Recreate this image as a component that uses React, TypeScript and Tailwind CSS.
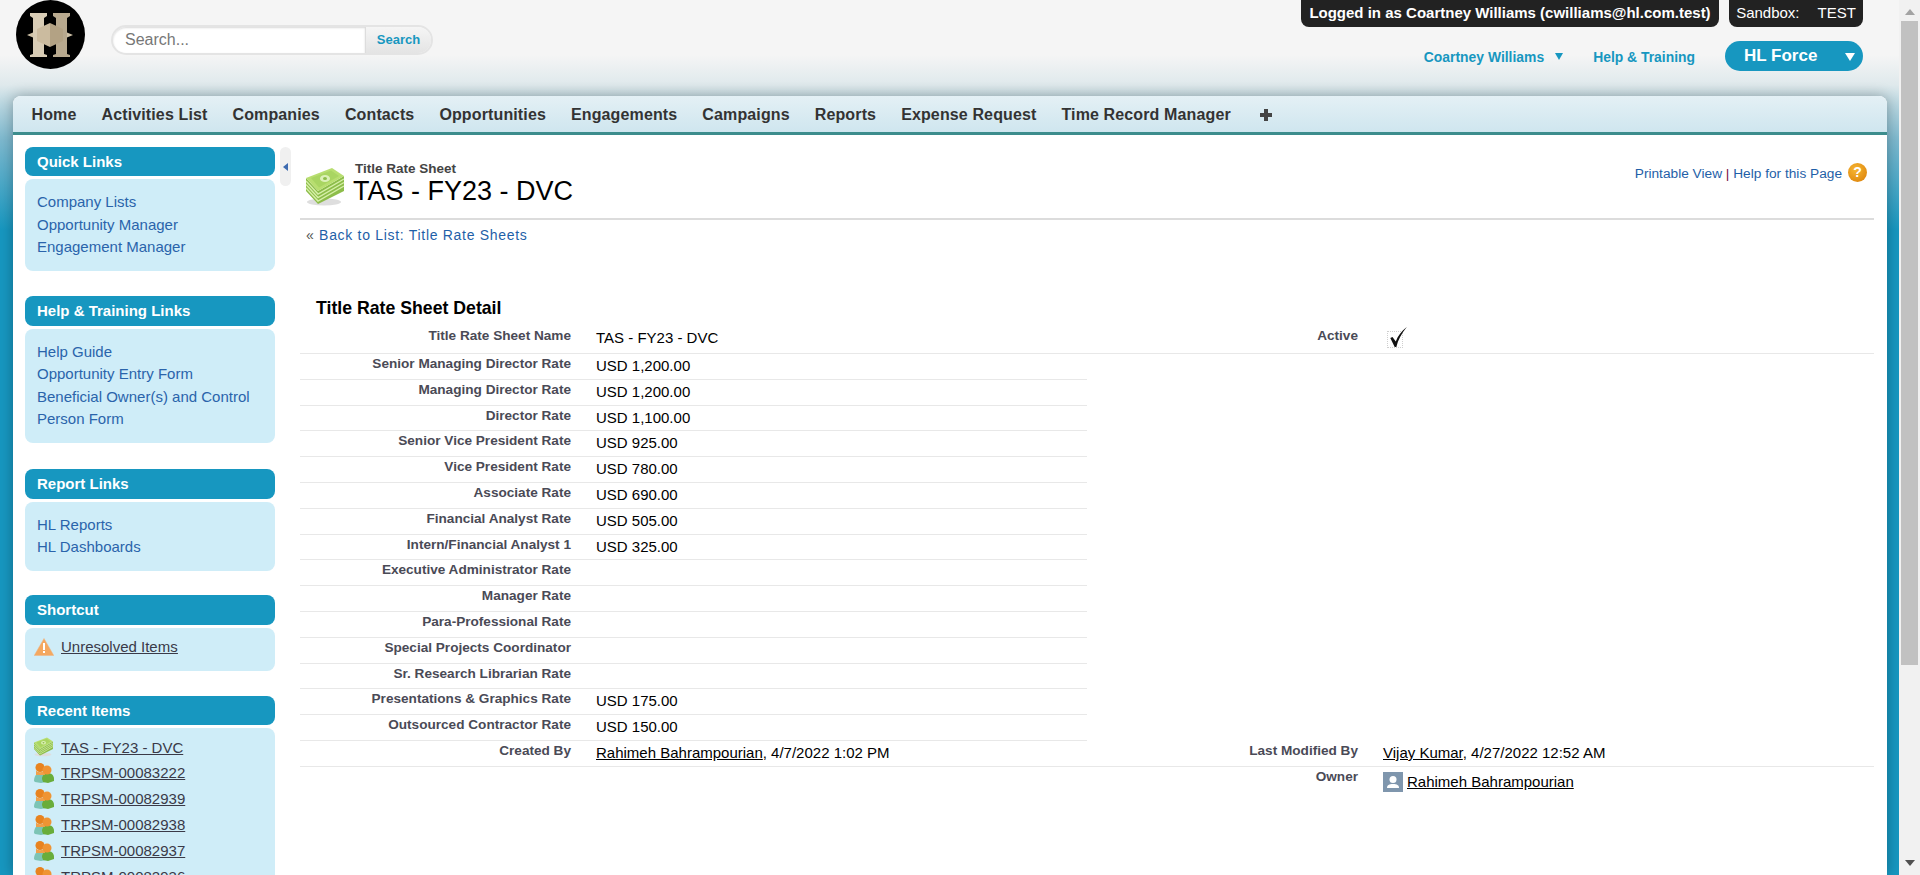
import React from 'react';

const navItems = ['Home', 'Activities List', 'Companies', 'Contacts', 'Opportunities', 'Engagements', 'Campaigns', 'Reports', 'Expense Request', 'Time Record Manager'];

const rateRows = [
  ['Senior Managing Director Rate', 'USD 1,200.00'],
  ['Managing Director Rate', 'USD 1,200.00'],
  ['Director Rate', 'USD 1,100.00'],
  ['Senior Vice President Rate', 'USD 925.00'],
  ['Vice President Rate', 'USD 780.00'],
  ['Associate Rate', 'USD 690.00'],
  ['Financial Analyst Rate', 'USD 505.00'],
  ['Intern/Financial Analyst 1', 'USD 325.00'],
  ['Executive Administrator Rate', ''],
  ['Manager Rate', ''],
  ['Para-Professional Rate', ''],
  ['Special Projects Coordinator', ''],
  ['Sr. Research Librarian Rate', ''],
  ['Presentations & Graphics Rate', 'USD 175.00'],
  ['Outsourced Contractor Rate', 'USD 150.00'],
];

const recentItems = ['TRPSM-00083222', 'TRPSM-00082939', 'TRPSM-00082938', 'TRPSM-00082937', 'TRPSM-00082936'];

function Logo() {
  return (
    <svg width="69" height="69" viewBox="0 0 69 69" className="shrink-0">
      <circle cx="34.5" cy="34.5" r="34.5" fill="#000" />
      <path d="M14 13h17v3l-3 2v36l3 1v2H14v-2l3-1V18l-3-2z" fill="#d8ccb5" />
      <path d="M37 13h17v3l-3 2v36l3 1v2H37v-2l3-1V18l-3-2z" fill="#b8a98e" />
      <path d="M11 35l6-2.5v5zM57 35l-6-2.5v5z" fill="#cfc2a8" />
      <path d="M21 29l13-6v24l-13-6z" fill="#cbbb9f" />
      <path d="M34 23l13 6v12l-13 6z" fill="#b3a284" />
    </svg>
  );
}

function MoneyIcon({ size }: { size: number }) {
  return (
    <svg width={size} height={size} viewBox="0 0 40 40">
      <ellipse cx="18" cy="35" rx="17" ry="3.5" fill="#dedede" />
      <path d="M0 11l12 13 26-15v15L12 37 0 24z" fill="#8dbd4a" />
      <path d="M0 14l12 13 26-15M0 17.5l12 13 26-15M0 21l12 13 26-15" fill="none" stroke="#d6efa8" strokeWidth="1.4" />
      <path d="M0 11L26 1l12 8-26 15z" fill="#b8de70" />
      <path d="M5 11L25 3.5l8 5.5-20 11.5z" fill="#a9d562" />
      <ellipse cx="19" cy="11.5" rx="5" ry="3.6" fill="#dcf0b8" />
      <ellipse cx="19" cy="11.5" rx="2" ry="1.5" fill="#8dbd4a" />
    </svg>
  );
}

function PeopleIcon() {
  return (
    <svg width="20" height="20" viewBox="0 0 20 20" className="shrink-0">
      <path d="M0 18c0-4 2-8 6-8s7 3 7 8l-1 1-5 1-6-1z" fill="#7cc4b5" />
      <path d="M8 16c0-4 3-6 6-6s6 2 6 6v2l-6 2-5-1z" fill="#69ad3a" />
      <circle cx="6" cy="4.5" r="4.5" fill="#e8831f" />
      <path d="M2 7c1 3 7 3 8 0l1 5H2z" fill="#f0a04b" />
      <circle cx="13" cy="7" r="4.5" fill="#ef9433" />
    </svg>
  );
}

function WarningIcon() {
  return (
    <svg width="20" height="18" viewBox="0 0 20 18" className="shrink-0">
      <path d="M10 0.5L19.8 17.5H0.2z" fill="#f4a860" stroke="#eeb483" strokeWidth="0.5" />
      <rect x="9" y="5" width="2" height="7" fill="#fff" />
      <rect x="9" y="13" width="2" height="2" fill="#fff" />
    </svg>
  );
}

function SideBox({ title, children, bodyClass, headClass }: { title: string; children: React.ReactNode; bodyClass: string; headClass: string }) {
  return (
    <div className="flex flex-col gap-[3px]">
      <div className={`flex items-center rounded-lg bg-[#1797c0] pt-[2px] pl-3 text-[15px] font-bold text-white ${headClass}`}>{title}</div>
      <div className={`rounded-lg bg-[#cfedf8] ${bodyClass}`}>{children}</div>
    </div>
  );
}

function LinkList({ items }: { items: string[] }) {
  return (
    <div className="flex flex-col pl-3 text-[15px] leading-[22.5px] text-[#2a64ab]">
      {items.map((item) => (
        <a key={item}>{item}</a>
      ))}
    </div>
  );
}

function Label({ text }: { text: string }) {
  return <div className="w-[271px] shrink-0 pt-[2px] text-right text-[13.6px] leading-[16px] font-bold text-[#4a4a56]">{text}</div>;
}

export default function App() {
  return (
    <div className="flex h-[875px] w-full overflow-hidden font-['Liberation_Sans',Arial,sans-serif]">
      <div className="flex min-w-0 flex-1 flex-col bg-[linear-gradient(180deg,#f5f5f5_0px,#f5f5f5_55px,#dfe9ec_85px,#b8d6e0_105px,#7db9cf_140px,#1797c0_230px)]">
        {/* Header */}
        <div className="flex h-[96px] shrink-0 justify-between pr-[36px]">
          <div className="flex items-start pl-4">
            <Logo />
            <div className="mt-[25px] ml-[26px] flex h-[30px] w-[322px] overflow-hidden rounded-full border-2 border-[#e4e4e4]">
              <input placeholder="Search..." className="min-w-0 flex-1 rounded-l-full bg-white pl-[12px] text-[16px] text-[#777] shadow-[inset_0_1px_2px_rgba(0,0,0,0.15)] outline-none placeholder:text-[#777]" />
              <div className="flex w-[66px] items-center justify-center border-l border-[#ddd] bg-[linear-gradient(180deg,#f5f5f5,#e4e4e4)] text-[13px] font-bold text-[#1797c0]">Search</div>
            </div>
          </div>
          <div className="flex flex-col items-end">
            <div className="flex gap-[10px]">
              <div className="flex h-[27px] w-[418px] items-center justify-center rounded-b-lg bg-[#222] text-[15px] font-bold text-white">Logged in as Coartney Williams (cwilliams@hl.com.test)</div>
              <div className="flex h-[27px] w-[134px] items-center justify-center gap-[18px] rounded-b-lg bg-[#222] text-[15px] text-white">
                <span>Sandbox:</span>
                <span>TEST</span>
              </div>
            </div>
            <div className="mt-[14px] flex items-center text-[13.9px] font-bold text-[#1797c0]">
              <span className="pt-[2px]">Coartney Williams</span>
              <span className="mt-[1px] ml-[11px] h-0 w-0 border-x-[4.5px] border-t-[7px] border-x-transparent border-t-[#1797c0]" />
              <span className="ml-[30px] pt-[2px]">Help &amp; Training</span>
              <div className="ml-[30px] flex h-[30px] w-[138px] items-center rounded-full bg-[#1797c0] pl-[19px] text-[17px] font-bold text-white">
                <span>HL Force</span>
                <span className="mt-[1px] ml-[28px] h-0 w-0 border-x-[5px] border-t-[8px] border-x-transparent border-t-white" />
              </div>
            </div>
          </div>
        </div>

        {/* Main panel */}
        <div className="mr-[12px] ml-[13px] flex min-h-0 flex-1 flex-col rounded-t-lg bg-white shadow-[0_0_14px_rgba(0,0,0,0.3)]">
          <div className="flex h-[39px] shrink-0 items-center gap-[25px] rounded-t-lg border-b-[3px] border-[#3c8d8d] bg-[linear-gradient(180deg,#e4f0f5,#cfe6ef)] pt-[1px] pl-[18.5px] text-[16px] font-bold tracking-[0.13px] text-[#333]">
            {navItems.map((item) => (
              <span key={item}>{item}</span>
            ))}
            <svg width="12" height="12" viewBox="0 0 12 12" className="ml-[4px]">
              <path d="M4 0h4v4h4v4H8v4H4V8H0V4h4z" fill="#444" />
            </svg>
          </div>

          <div className="flex min-h-0 flex-1 overflow-hidden">
            {/* Sidebar */}
            <div className="flex w-[262px] shrink-0 flex-col pt-3 pl-3">
              <SideBox title="Quick Links" headClass="h-[29px]" bodyClass="py-3">
                <LinkList items={['Company Lists', 'Opportunity Manager', 'Engagement Manager']} />
              </SideBox>
              <div className="mt-[25px]">
                <SideBox title="Help & Training Links" headClass="h-[30px]" bodyClass="py-3">
                  <LinkList items={['Help Guide', 'Opportunity Entry Form', 'Beneficial Owner(s) and Control Person Form']} />
                </SideBox>
              </div>
              <div className="mt-[26px]">
                <SideBox title="Report Links" headClass="h-[30px]" bodyClass="py-3">
                  <LinkList items={['HL Reports', 'HL Dashboards']} />
                </SideBox>
              </div>
              <div className="mt-[24px]">
                <SideBox title="Shortcut" headClass="h-[30px]" bodyClass="h-[43px] pt-[8px] pl-[9px]">
                  <div className="flex items-center gap-[7px] text-[15px] text-[#3a3a48] underline">
                    <WarningIcon />
                    <a>Unresolved Items</a>
                  </div>
                </SideBox>
              </div>
              <div className="mt-[25px]">
                <SideBox title="Recent Items" headClass="h-[29px]" bodyClass="pt-[7px] pl-[9px]">
                  <div className="flex flex-col text-[15px] leading-[25.9px] text-[#3a3a48] underline">
                    <div className="flex items-center gap-[7px]">
                      <MoneyIcon size={20} />
                      <a>TAS - FY23 - DVC</a>
                    </div>
                    {recentItems.map((item) => (
                      <div key={item} className="flex items-center gap-[7px]">
                        <PeopleIcon />
                        <a>{item}</a>
                      </div>
                    ))}
                  </div>
                </SideBox>
              </div>
            </div>

            {/* Collapse handle */}
            <div className="mt-3 ml-[5px] flex h-[39px] w-[11px] shrink-0 items-center justify-center rounded-md bg-[#f0f0f0]">
              <span className="h-0 w-0 border-y-[4px] border-r-[5px] border-y-transparent border-r-[#3d6bb0]" />
            </div>

            {/* Content */}
            <div className="ml-[9px] min-w-0 flex-1 pr-[13px] text-black">
              <div className="flex h-[85px] justify-between border-b-2 border-[#dcdcdc] pl-[6px]">
                <div className="flex pt-[25px]">
                  <div className="mt-[7px] mr-[7px]">
                    <MoneyIcon size={40} />
                  </div>
                  <div>
                    <div className="mt-[1px] ml-[2px] text-[13.5px] leading-[16px] font-bold text-[#444]">Title Rate Sheet</div>
                    <h1 className="-mt-[1px] text-[27px] leading-[30px] text-black">TAS - FY23 - DVC</h1>
                  </div>
                </div>
                <div className="flex items-center self-start pt-[26px] pr-[7px]">
                  <span className="pt-[3px] text-[13.7px] text-[#1f5fa8]">
                    Printable View <span className="text-[#7a1040]">|</span> Help for this Page
                  </span>
                  <span className="ml-[6px] flex h-[19px] w-[19px] items-center justify-center rounded-full bg-[radial-gradient(circle_at_40%_35%,#f7b733,#d97c06)] text-[14px] font-bold text-white">?</span>
                </div>
              </div>

              <div className="mt-[7px] pl-[6px] text-[14px] leading-[16px] tracking-[0.7px] text-[#1f5fa8]">
                <span className="text-[#555]">«</span> Back to List: Title Rate Sheets
              </div>

              <h2 className="mt-[55px] pl-4 text-[17.7px] leading-[20px] font-bold text-black">Title Rate Sheet Detail</h2>

              <div className="mt-[8px] text-[15px]">
                <div className="flex h-[28px] border-b border-[#e8e8e8]">
                  <Label text="Title Rate Sheet Name" />
                  <div className="ml-[25px] w-[491px] pt-[4px] leading-[16px]">TAS - FY23 - DVC</div>
                  <Label text="Active" />
                  <div className="relative mt-[5px] ml-[29px] h-[17px] w-[16px] border border-dotted border-[#cfcfcf]">
                    <svg width="20" height="22" viewBox="0 0 18 20" className="absolute -top-[6px] left-0">
                      <path d="M2 11l2-1 3 4C9 9 12 5 17 1 12 7 9 13 7.5 19H6z" fill="#111" />
                    </svg>
                  </div>
                </div>

                {rateRows.map(([label, value]) => (
                  <div key={label} className="flex h-[25.8px] w-[787px] border-b border-[#e8e8e8]">
                    <Label text={label} />
                    <div className="ml-[25px] pt-[4px] leading-[16px]">{value}</div>
                  </div>
                ))}

                <div className="flex h-[25.8px] border-b border-[#e8e8e8]">
                  <Label text="Created By" />
                  <div className="ml-[25px] w-[491px] pt-[4px] leading-[16px]">
                    <span className="underline">Rahimeh Bahrampourian</span>, 4/7/2022 1:02 PM
                  </div>
                  <Label text="Last Modified By" />
                  <div className="ml-[25px] pt-[4px] leading-[16px]">
                    <span className="underline">Vijay Kumar</span>, 4/27/2022 12:52 AM
                  </div>
                </div>

                <div className="flex pl-[787px]">
                  <Label text="Owner" />
                  <div className="mt-[4px] ml-[25px] flex items-center gap-[4px]">
                    <svg width="20" height="20" viewBox="0 0 20 20">
                      <rect width="20" height="20" fill="#7f96ad" />
                      <circle cx="10" cy="7.5" r="3.5" fill="#fff" />
                      <path d="M4 16c0-3 2-4 6-4s6 1 6 4z" fill="#fff" />
                    </svg>
                    <span className="underline">Rahimeh Bahrampourian</span>
                  </div>
                </div>
              </div>
            </div>
          </div>
        </div>
      </div>

      {/* Scrollbar */}
      <div className="flex w-[21px] shrink-0 flex-col items-center bg-[#f1f1f1]">
        <span className="mt-[9px] h-0 w-0 border-x-[5px] border-b-[6px] border-x-transparent border-b-[#a3a3a3]" />
        <div className="mt-[6px] h-[644px] w-[17px] bg-[#c1c1c1]" />
        <span className="mt-auto mb-[9px] h-0 w-0 border-x-[5px] border-t-[6px] border-x-transparent border-t-[#505050]" />
      </div>
    </div>
  );
}
